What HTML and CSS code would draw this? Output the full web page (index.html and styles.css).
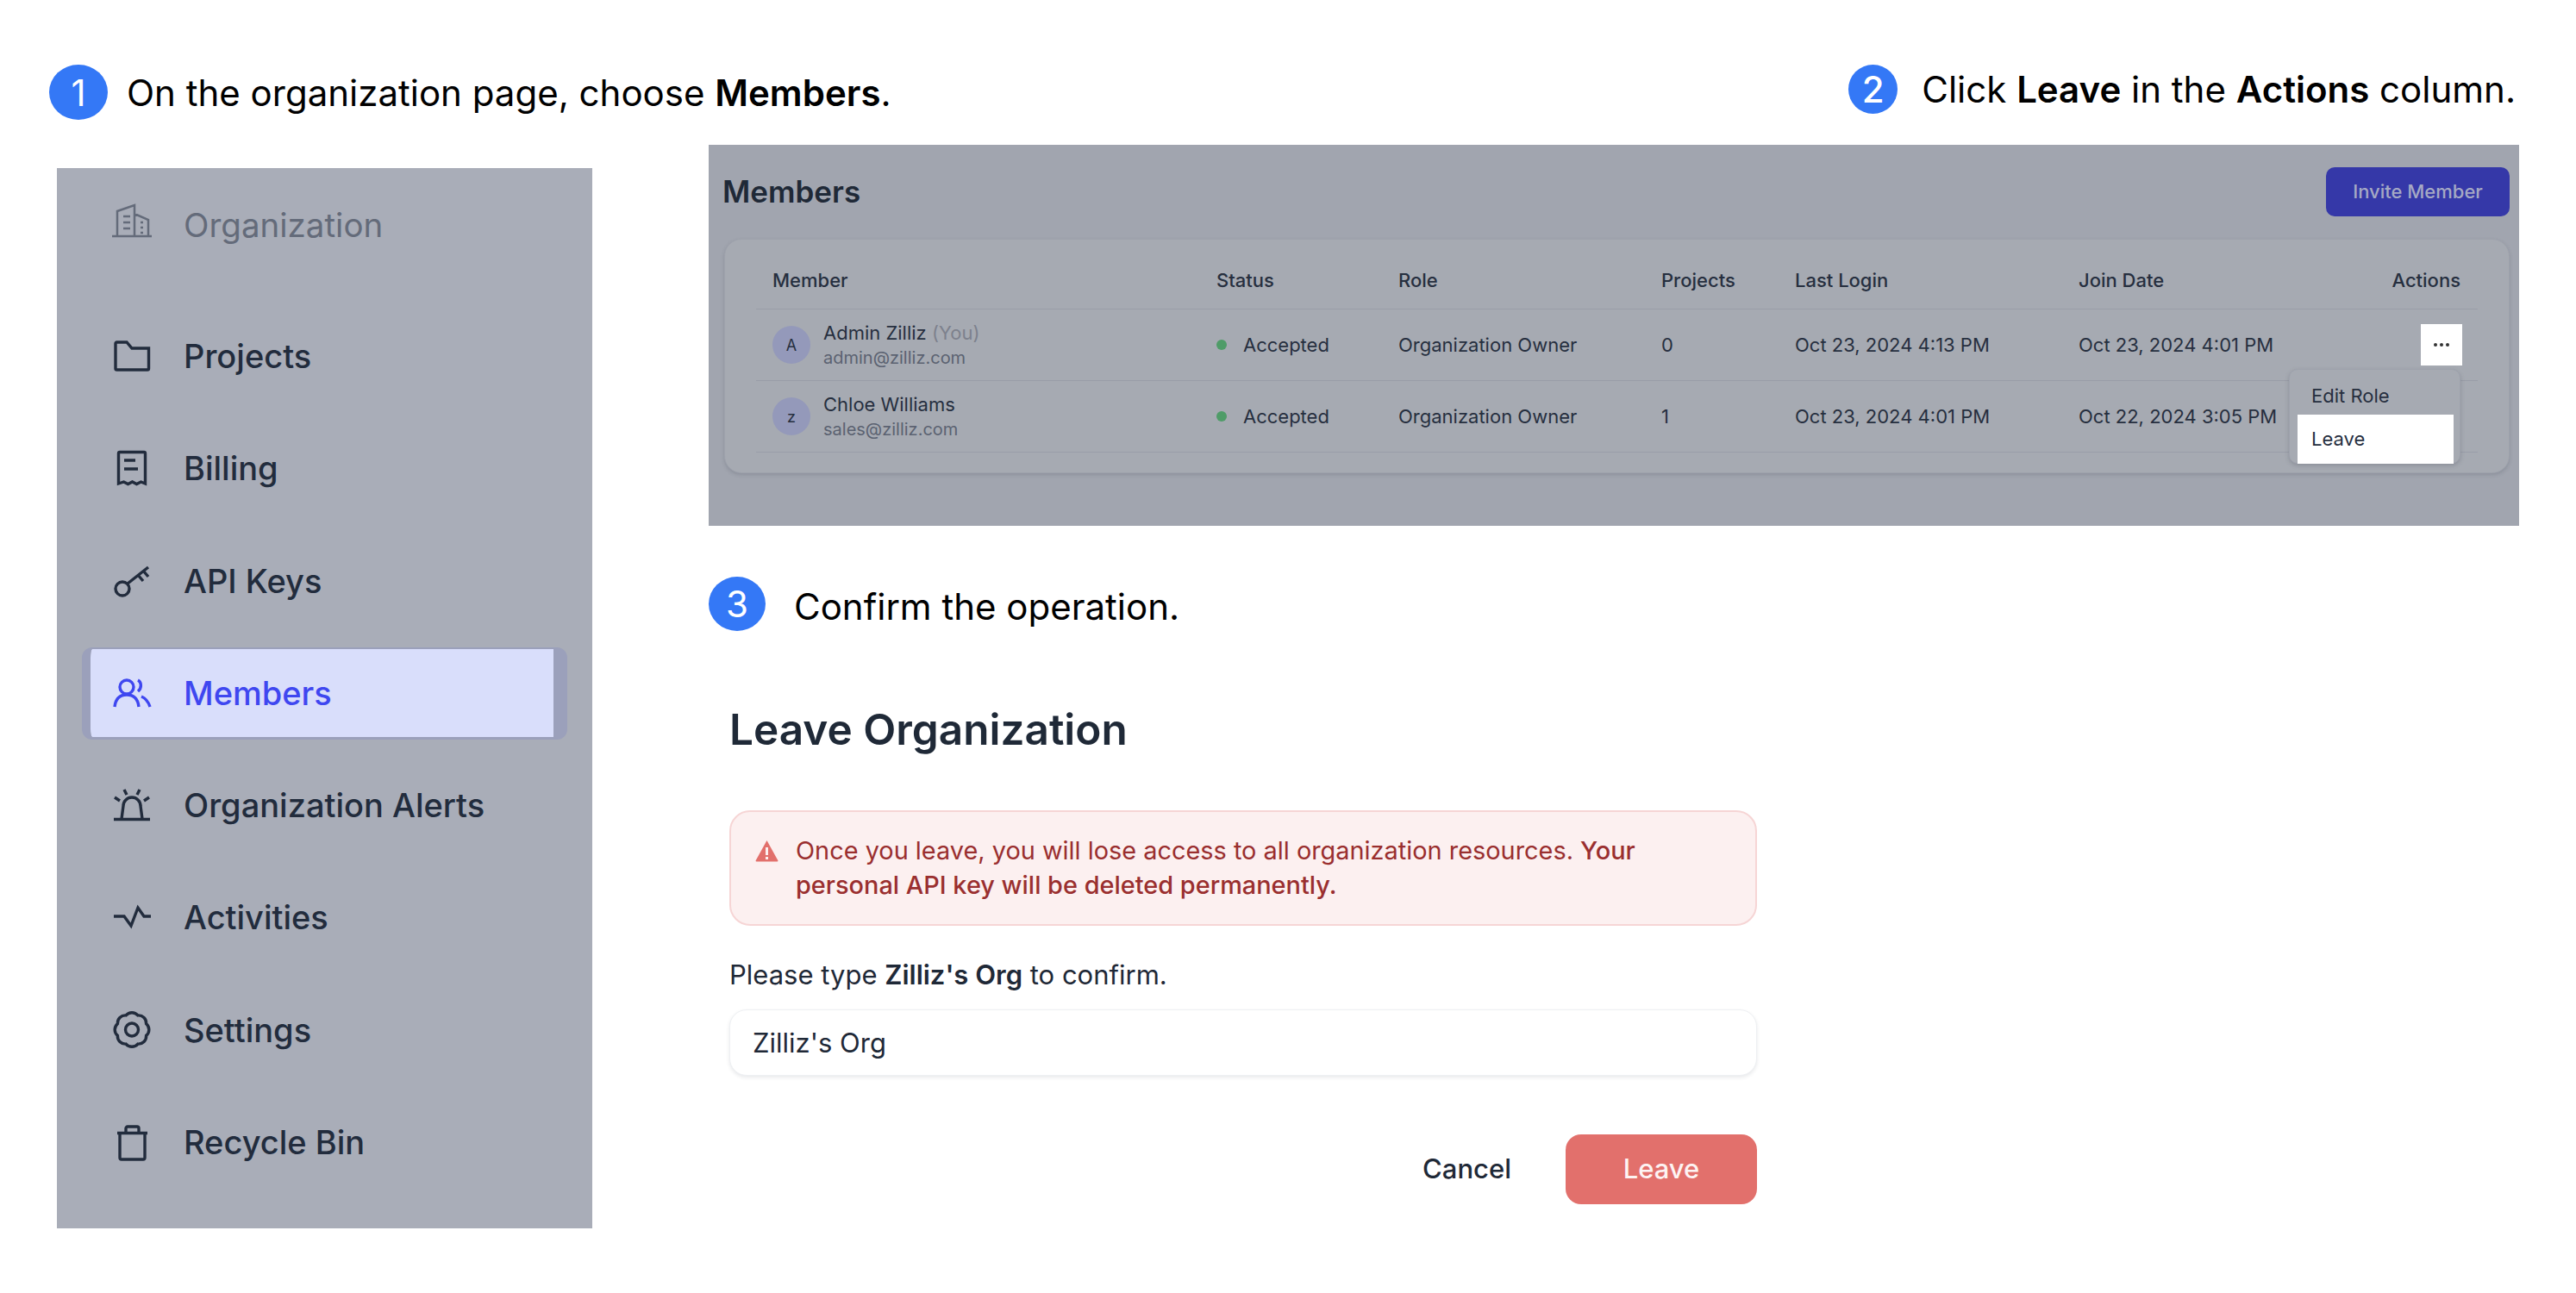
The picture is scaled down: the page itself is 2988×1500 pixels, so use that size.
FILE: index.html
```html
<!DOCTYPE html>
<html lang="en">
<head>
    <meta charset="UTF-8">
    <title>Leave an organization</title>
    <link rel="stylesheet" href="styles.css">
</head>
<body>

    <div class="page">

        <!-- step 1 -->
        <div class="left-col">
            <div class="step step-one">
                <span class="badge badge-one">1</span>
                <p>On the organization page, choose <b>Members</b>.</p>
            </div>

            <nav class="sidebar">
                <div class="nav-item nav-org">
                    <svg class="icon icon-thin" viewBox="0 0 44 44"><path d="M-1 37h46M5 37V8l20-7v36M25 11l16 7v19M12 14h8M12 21h8M12 28h8M32 21h3M32 27h3M32 33h3"/></svg>
                    <span>Organization</span>
                </div>
                <div class="nav-item">
                    <svg class="icon" viewBox="0 0 44 44"><path d="M3 7.500A1.500 1.500 0 0 1 4.500 6H16l6 7h19.500v23.500A1.500 1.500 0 0 1 40 38H4.500A1.500 1.500 0 0 1 3 36.500z"/></svg>
                    <span>Projects</span>
                </div>
                <div class="nav-item">
                    <svg class="icon" viewBox="0 0 44 44"><path d="M6.500 40V5A1.500 1.500 0 0 1 8 3.500h28A1.500 1.500 0 0 1 37.500 5v35l-5-2-5 2.500-5-2.500-5 2.500-5-2.500zM13 13h13M13 23h16"/></svg>
                    <span>Billing</span>
                </div>
                <div class="nav-item">
                    <svg class="icon" viewBox="0 0 44 44"><circle cx="11" cy="31" r="8"/><path d="M17 25L41 6M29 15l6 7M35 10l6 7"/></svg>
                    <span>API Keys</span>
                </div>
                <div class="nav-item active">
                    <svg class="icon" viewBox="0 0 44 44"><circle cx="16" cy="15" r="8"/><path d="M2 38c1-9 6-14 14-14s13 5 14 14M29 7c4 2 5 9 0 13M33 26c5 2 8 6 10 12"/></svg>
                    <span>Members</span>
                </div>
                <div class="nav-item">
                    <svg class="icon" viewBox="0 0 44 44"><path d="M1 38.500h42M10 38l2-15a10 10 0 0 1 20 0l2 15M13 4l3 6M31 4l-3 6M2 13l6 4M42 13l-6 4"/></svg>
                    <span>Organization Alerts</span>
                </div>
                <div class="nav-item">
                    <svg class="icon" viewBox="0 0 44 44"><path d="M1 21h12l8 11 8-21 7 10h8"/></svg>
                    <span>Activities</span>
                </div>
                <div class="nav-item">
                    <svg class="icon" viewBox="0 0 44 44"><path d="M15.100 4.900A9 9 0 0 1 28.900 4.900 9 9 0 0 1 38.600 14.600 9 9 0 0 1 38.600 28.400 9 9 0 0 1 28.900 38.100 9 9 0 0 1 15.100 38.100 9 9 0 0 1 5.400 28.400 9 9 0 0 1 5.400 14.600 9 9 0 0 1 15.100 4.900z"/><circle cx="22" cy="21.500" r="7.500"/></svg>
                    <span>Settings</span>
                </div>
                <div class="nav-item">
                    <svg class="icon" viewBox="0 0 44 44"><path d="M5 11.500h35M8 12v28a2 2 0 0 0 2 2h25a2 2 0 0 0 2-2V12M15 11V6a2 2 0 0 1 2-2h11a2 2 0 0 1 2 2v5"/></svg>
                    <span>Recycle Bin</span>
                </div>
            </nav>
        </div>

        <div class="right-col">
            <!-- step 2 -->
            <div class="step step-two">
                <span class="badge badge-two">2</span>
                <p>Click <b>Leave</b> in the <b>Actions</b> column.</p>
            </div>

            <div class="members-panel">
                <div class="panel-head">
                    <h2>Members</h2>
                    <button class="invite-btn">Invite Member</button>
                </div>

                <div class="members-card">
                    <div class="row head-row">
                        <div>Member</div>
                        <div>Status</div>
                        <div>Role</div>
                        <div>Projects</div>
                        <div>Last Login</div>
                        <div>Join Date</div>
                        <div class="cell-right">Actions</div>
                    </div>

                    <div class="row body-row">
                        <div class="member">
                            <span class="avatar">A</span>
                            <div>
                                <div class="name">Admin Zilliz <span class="you">(You)</span></div>
                                <div class="email">admin@zilliz.com</div>
                            </div>
                        </div>
                        <div class="status"><i class="dot"></i>Accepted</div>
                        <div>Organization Owner</div>
                        <div>0</div>
                        <div>Oct 23, 2024 4:13 PM</div>
                        <div>Oct 23, 2024 4:01 PM</div>
                        <div class="cell-right">
                            <button class="dots-btn">
                                <svg viewBox="0 0 20 6" width="20" height="6"><circle cx="3" cy="3" r="2"/><circle cx="10" cy="3" r="2"/><circle cx="17" cy="3" r="2"/></svg>
                            </button>
                        </div>
                    </div>

                    <div class="row body-row">
                        <div class="member">
                            <span class="avatar">z</span>
                            <div>
                                <div class="name">Chloe Williams</div>
                                <div class="email">sales@zilliz.com</div>
                            </div>
                        </div>
                        <div class="status"><i class="dot"></i>Accepted</div>
                        <div>Organization Owner</div>
                        <div>1</div>
                        <div>Oct 23, 2024 4:01 PM</div>
                        <div>Oct 22, 2024 3:05 PM</div>
                        <div></div>
                    </div>

                    <div class="row-menu">
                        <div class="menu-item">Edit Role</div>
                        <div class="menu-item selected">Leave</div>
                    </div>
                </div>
            </div>

            <!-- step 3 -->
            <div class="step step-three">
                <span class="badge badge-three">3</span>
                <p>Confirm the operation.</p>
            </div>

            <div class="dialog">
                <h1>Leave Organization</h1>

                <div class="alert">
                    <svg class="alert-icon" viewBox="0 0 27 26"><path d="M13.500 1L26.500 24.500a1 1 0 0 1-1 1H1.500a1 1 0 0 1-1-1z"/><rect x="12" y="9" width="3" height="9" fill="#fcf0f0"/><rect x="12" y="20" width="3" height="3" fill="#fcf0f0"/></svg>
                    <p>Once you leave, you will lose access to all organization resources. <b>Your<br>personal API key will be deleted permanently.</b></p>
                </div>

                <p class="confirm-label">Please type <b>Zilliz's Org</b> to confirm.</p>
                <input class="confirm-input" type="text" value="Zilliz's Org">

                <div class="dialog-actions">
                    <button class="cancel-btn">Cancel</button>
                    <button class="leave-btn">Leave</button>
                </div>
            </div>
        </div>

    </div>

</body>
</html>
```

FILE: styles.css
```css
* {
    margin: 0;
    padding: 0;
    box-sizing: border-box;
    font-family: Inter, "Liberation Sans", sans-serif;
}

body {
    background-color: white;
    width: 2988px;
    height: 1500px;
    overflow: hidden;
}

.page {
    display: flex;
    align-items: flex-start;
    padding: 75px 0 0 57px;
}

/* numbered steps */
.step {
    display: flex;
    align-items: center;
    color: black;
    font-size: 42px;
    white-space: nowrap;
}

.step b {
    font-weight: 600;
}

.badge {
    display: flex;
    justify-content: center;
    align-items: center;
    flex-shrink: 0;
    background-color: #3478f6;
    border-radius: 50%;
    color: white;
}

.badge-one {
    width: 68px;
    height: 64px;
    margin-right: 22px;
    font-size: 42px;
}

.badge-two {
    width: 57px;
    height: 57px;
    margin-right: 28px;
    font-size: 42px;
    font-weight: 500;
}

.badge-three {
    width: 66px;
    height: 63px;
    margin-right: 33px;
    font-size: 42px;
}

/* left column */
.left-col {
    width: 765px;
    flex-shrink: 0;
}

.sidebar {
    width: 621px;
    height: 1230px;
    margin: 56px 0 0 9px;
    padding: 13px 29px 0;
    background-color: #a9adb8;
}

.nav-item {
    display: flex;
    align-items: center;
    gap: 38px;
    height: 107px;
    margin-bottom: 23.300px;
    padding-left: 26px;
    border: solid transparent;
    border-width: 2px 16px 3px 10px;
    border-radius: 12px;
    color: #222c3d;
    font-size: 38px;
    font-weight: 500;
}

.nav-org {
    margin-bottom: 45px;
    color: #646b7a;
    font-weight: 400;
    font-size: 38.500px;
}

.nav-item.active {
    background-color: #d9defb;
    background-clip: padding-box;
    border-color: #9ba0bb;
    color: #3f47f0;
}

.icon {
    width: 44px;
    height: 44px;
    flex-shrink: 0;
    overflow: visible;
    fill: none;
    stroke: currentColor;
    stroke-width: 3.400;
}

.icon-thin {
    stroke-width: 2.500;
    position: relative;
    top: -2px;
}

/* right column */
.right-col {
    width: 2100px;
    flex-shrink: 0;
}

.step-two {
    justify-content: flex-end;
    padding-right: 4px;
}

.members-panel {
    height: 442px;
    margin-top: 36px;
    padding: 26px 11px 0 18px;
    background-color: #a1a5af;
}

.panel-head {
    display: flex;
    justify-content: space-between;
    align-items: center;
    margin-left: -2px;
}

.panel-head h2 {
    margin-top: -2px;
    color: #1f2937;
    font-size: 35px;
    font-weight: 600;
}

.invite-btn {
    width: 213px;
    height: 57px;
    padding-bottom: 2px;
    background-color: #3538a8;
    border: none;
    border-radius: 10px;
    color: #a5a9c4;
    font-size: 22px;
    font-weight: 500;
}

.members-card {
    position: relative;
    height: 272px;
    margin-top: 26px;
    padding: 0 36px;
    background-color: #a6aab2;
    border: 1px solid #9ea2ac;
    border-radius: 20px;
    box-shadow: 0 2px 4px rgba(60, 65, 80, 0.2);
    color: #262f3f;
    font-size: 22px;
}

.row {
    display: grid;
    padding: 0 20px 0 19px;
    border-bottom: 1px solid #999da8;
}

.row > div:nth-child(6) {
    white-space: nowrap;
}

.head-row {
    grid-template-columns: 515px 211px 305px 155px 329px 1fr;
    height: 81px;
    padding-top: 33px;
    line-height: 28px;
    font-weight: 500;
}

.head-row .cell-right {
    position: absolute;
    right: 56px;
}

.body-row {
    grid-template-columns: 515px 211px 305px 155px 329px 250px 1fr;
    align-items: center;
    height: 83px;
}

.cell-right {
    display: flex;
    justify-content: flex-end;
}

.member {
    display: flex;
    align-items: center;
    gap: 15px;
}

.avatar {
    display: flex;
    justify-content: center;
    align-items: center;
    width: 44px;
    height: 44px;
    background-color: #9499ba;
    border-radius: 50%;
    font-size: 18px;
}

.name {
    margin-top: 1px;
    line-height: 29px;
}

.you {
    color: #7d818d;
}

.email {
    line-height: 29px;
    color: #5b6271;
    font-size: 20px;
}

.status {
    display: flex;
    align-items: center;
    gap: 19px;
}

.dot {
    width: 12px;
    height: 12px;
    background-color: #4f9c68;
    border-radius: 50%;
}

.dots-btn {
    display: flex;
    justify-content: center;
    align-items: center;
    width: 48px;
    height: 48px;
    margin-right: -2px;
    background-color: white;
    border: none;
}

.dots-btn svg {
    fill: #333;
}

/* dropdown under the dots button */
.row-menu {
    position: absolute;
    top: 150px;
    left: 1814px;
    width: 199px;
    height: 110px;
    padding: 5px 7px 1px 9px;
    background-color: #a6aab2;
    border: 1px solid #9ea2ac;
    border-radius: 10px;
    box-shadow: 0 2px 5px rgba(60, 65, 80, 0.25);
}

.menu-item {
    height: 47px;
    padding-left: 16px;
    line-height: 50px;
}

.menu-item.selected {
    height: 57px;
    background-color: white;
    line-height: 57px;
}

/* step 3 */
.step-three {
    margin-top: 59px;
}

.step-three p {
    padding-top: 6px;
}

.dialog {
    width: 1192px;
    margin-left: 24px;
    color: #1f2937;
}

.dialog h1 {
    margin-top: 84px;
    font-size: 49.500px;
    font-weight: 600;
    line-height: 60px;
}

.alert {
    display: flex;
    gap: 20px;
    height: 134px;
    margin-top: 64px;
    padding: 25px 28px;
    background-color: #fcf0f0;
    border: 2px solid #f6d5d5;
    border-radius: 24px;
    color: #9a2f2f;
    font-size: 28.900px;
    line-height: 40px;
}

.alert b {
    font-weight: 500;
}

.alert-icon {
    flex-shrink: 0;
    width: 27px;
    height: 26px;
    margin-top: 7px;
    fill: #e2706c;
}

.confirm-label {
    margin-top: 37px;
    font-size: 31px;
    line-height: 40px;
}

.confirm-label b {
    font-weight: 600;
}

.confirm-input {
    display: block;
    width: 100%;
    height: 77px;
    margin-top: 20px;
    padding: 0 26px;
    background-color: white;
    border: 1px solid #eef0f3;
    border-radius: 20px;
    box-shadow: 0 2px 4px rgba(30, 40, 60, 0.1);
    color: #1f2937;
    font-size: 31px;
}

.dialog-actions {
    display: flex;
    justify-content: flex-end;
    align-items: center;
    gap: 63px;
    margin-top: 68px;
}

.cancel-btn {
    padding-bottom: 2px;
    background: none;
    border: none;
    color: #1f2937;
    font-size: 31px;
    font-weight: 500;
}

.leave-btn {
    width: 222px;
    height: 81px;
    padding-bottom: 2px;
    background-color: #e2706c;
    border: none;
    border-radius: 18px;
    color: #fdf3f3;
    font-size: 31px;
    font-weight: 500;
}
```
